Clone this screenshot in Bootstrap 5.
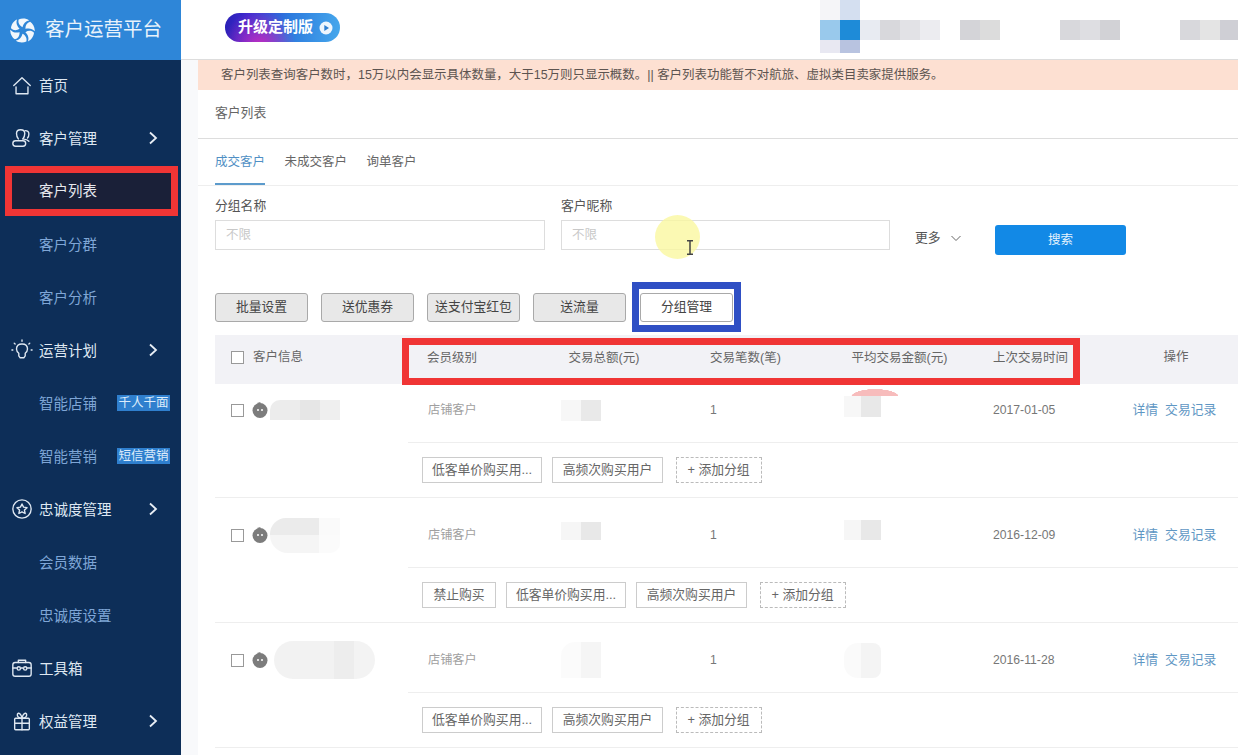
<!DOCTYPE html>
<html lang="zh-CN">
<head>
<meta charset="utf-8">
<title>客户运营平台</title>
<link href="https://cdn.jsdelivr.net/npm/bootstrap@5.3.0/dist/css/bootstrap.min.css" rel="stylesheet">
<style>
html,body{height:755px;overflow:hidden}
body{font-family:"Liberation Sans","Noto Sans CJK SC",sans-serif;font-size:13px;color:#666;background:#f8f9fb}
.shell{width:1238px;height:755px;position:relative}
.side-col{width:181px;flex:none;background:#0d2e58;color:#dfe8f2;height:755px;overflow:hidden}
.brand{height:60px;background:#2e86d8;color:#e8f2fb;font-size:19.5px;padding-left:10px;gap:10px}
.side-item{height:53px;padding:3px 0 0 11px;color:#dfe8f2;font-size:14.5px;white-space:nowrap}
.side-first{height:50px;margin-bottom:1.5px}
.side-item svg.ic{width:22px;height:22px;flex:none;margin-right:6px;margin-top:-3px;fill:none;stroke:#dfe8f2;stroke-width:1.5;stroke-linecap:round;stroke-linejoin:round}
.side-item .chev{position:absolute;left:148px;margin-top:-3px;width:10px;height:14px;fill:none;stroke:#e8eef5;stroke-width:1.8}
.side-sub{padding-left:39px;color:#7fa6d6}
.side-tag{position:absolute;left:117px;margin-top:-3px;width:53px;height:16px;line-height:16px;background:#2f7fce;color:#dcecfb;font-size:12.5px;text-align:center;white-space:nowrap;overflow:hidden}
.side-hit{height:50px;margin:1.5px 3px 1.5px 5px;border:7px solid #f03535;background:#1a2038;color:#e6e8ee;padding:2px 0 0 27px;font-size:14.5px}
.main-col{flex:1;min-width:0;height:755px}
.top-bar{height:60px;background:#fff;border-bottom:1px solid #ddd;padding-left:44px}
.upgrade{height:29px;width:115px;margin-bottom:4px;border-radius:15px;color:#fff;font-weight:700;font-size:15px;padding-left:13px;gap:6px;white-space:nowrap;background:radial-gradient(circle at 30% 115%,#c42bc0 0,rgba(196,43,192,0) 42%),linear-gradient(95deg,#2a1fb5 0,#3d2bd0 20%,#2c7ade 55%,#46a8ec 100%)}
.mosaic{width:418px;height:53px;align-self:flex-start;margin-left:auto;background:
linear-gradient(90deg,#f5f5f8 0 20px,#d4dff0 20px 40px,transparent 40px) 0 0/100% 20px no-repeat,
linear-gradient(90deg,#99c9ec 0 20px,#1e8bd8 20px 40px,#e8ebf2 40px 60px,#d8d8dc 60px 80px,#e2e2e6 80px 100px,#ececf0 100px 120px,transparent 120px 140px,#d4d4d8 140px 160px,#dcdcdc 160px 180px,transparent 180px 240px,#d8d8dc 240px 260px,#dedee2 260px 280px,#d2d2d6 280px 300px,transparent 300px 360px,#d8d8dc 360px 380px,#e4e4e4 380px 400px,#cfcfd5 400px 418px) 0 20px/100% 20px no-repeat,
linear-gradient(90deg,#e8e8f2 0 20px,#b8c3e0 20px 40px,transparent 40px) 0 40px/100% 13px no-repeat}
.page{margin-left:17px;background:#fff;height:695px;overflow:hidden}
.page>*{flex:none}
.notice{height:30px;background:#fde0d2;color:#5c5450;font-size:12.46px;padding-left:23px;white-space:nowrap;overflow:hidden}
.crumb{height:49px;margin-left:0;padding:0 0 3px 17px;border-bottom:1px solid #ddd;color:#666;font-size:12.8px}
.tabs-row{height:47px;padding-left:17px;gap:19.5px;border-bottom:1px solid #eee;font-size:12.5px}
.tabs-row .nav-link{padding:0;height:46px;line-height:46px;color:#666}
.tabs-row .nav-link.active{color:#4f8fc4;border-bottom:2px solid #5c9bcc}
.search-row{padding:11px 0 0 17px}
.field-label{display:block;font-size:12.8px;color:#555;line-height:18px;margin:0 0 5px}
.fld1{width:330px;margin-right:16px}
.fld2{width:329px}
.search-row .form-control{height:30px;border-radius:0;border:1px solid #ddd;padding:0 10px;font-size:12.5px;font-family:inherit}
.search-row .form-control::placeholder{color:#c8c8c8}
.more-link{margin:26px 0 0 25px;width:80px;color:#555;font-size:12.8px;gap:10px;height:30px}
.more-link svg{width:10px;height:7px;fill:none;stroke:#666;stroke-width:1}
.search-btn{margin:28px 0 0 0;width:131px;height:30px;background:#1289e6;border:0;border-radius:3px;color:#e6f3fd;font-size:12.5px;padding:0}
.tool-row{margin-top:27px;padding-left:17px;gap:13px;height:50px}
.tool-btn{width:93px;height:29px;padding:0;background:#e8e8e8;border:1px solid #a9a9a9;border-radius:3px;color:#444;font-size:12.8px;white-space:nowrap}
.blue-frame{width:109px;height:50px;border:7px solid #2f4fc4;margin-left:-7px;padding:0 1px}
.blue-frame .tool-btn{background:#fff;width:93px}
.head-row{margin:3px 0 1px 17px;height:49px;background:#f2f2f6;color:#666;font-size:12.5px;white-space:nowrap}
.head-left{width:187px;padding:0 0 5px 16px;gap:9px;align-self:stretch}
.red-frame{width:678px;height:47px;align-self:flex-end;margin-bottom:-1px;border:7px solid #f03535;padding:0 0 7px 18px}
.cl{width:141.5px;flex:none}
.head-ops{padding:0 0 5px 34px;text-align:center;flex:1}
.tick{width:13px;height:13px;border:1px solid #999;background:#fff;flex:none;display:block}
.data-row{margin-left:17px;border-bottom:1px solid #eee;height:125px;color:#777;font-size:12.2px;white-space:nowrap}
.row-top{height:70px;padding-top:5px;margin-left:193px;border-bottom:1px solid #eee}
.row-first{height:113px}
.row-first .row-top{height:58px;padding-top:0;padding-bottom:7px}
.row-cell0{width:212px;margin-left:-193px;padding-left:16px;gap:9px;flex:none}
.tier{color:#a0a0a0;padding-left:1px}
.pad-blob{margin-left:-8px}
.cust{margin-left:-1px;width:16px;height:16px;flex:none}
.cust-row{gap:2px}
.blur-a{width:70px;height:20px;border-radius:10px 0 0 0;background:linear-gradient(90deg,#ececec 0 30px,#e6e6e6 30px 50px,#efefef 50px)}
.blur-b{width:70px;height:35px;border-radius:16px 0 10px 18px;background:linear-gradient(90deg,#ebebeb 0 49px,#fafafa 49px) 0 0/100% 17px no-repeat,linear-gradient(90deg,#f5f5f5 0 49px,#fbfbfb 49px) 0 17px/100% 18px no-repeat}
.blur-c{width:101px;height:38px;margin-left:4px;border-radius:19px;background:linear-gradient(90deg,#f2f2f2 0 60px,#ededed 60px 80px,#f3f3f3 80px)}
.amt1{width:40px;height:21px;background:linear-gradient(90deg,#f7f7f7 0 20px,#e9e9e9 20px)}
.amt2{width:40px;height:18px;margin-top:-8px;background:linear-gradient(90deg,#f6f6f6 0 20px,#e8e8e8 20px)}
.amt3{width:40px;height:36px;border-radius:14px 0 0 0;background:linear-gradient(90deg,#fbfbfb 0 20px,#f5f5f5 20px)}
.avg1{width:54px;height:28px;margin-top:-14px;background:radial-gradient(ellipse 24px 8px at 31px 8px,#f7bcbc 98%,transparent 100%) 0 0/54px 7px no-repeat,linear-gradient(90deg,#f7f7f7 0 17px,#e8e8e8 17px 37px,transparent 37px) 0 7px/54px 21px no-repeat}
.avg2{width:37px;height:20px;margin-top:-10px;background:linear-gradient(90deg,#f6f6f6 0 17px,#e8e8e8 17px)}
.avg3{width:37px;height:35px;border-radius:14px 8px 8px 14px;background:linear-gradient(90deg,#fafafa 0 17px,#f4f4f4 17px)}
.ops{gap:7px;margin-left:-2px;color:#5f97c4;font-size:12.8px}
.tag-row{margin-left:207px;padding-top:14px;gap:10px}
.tag-chip{height:26px;line-height:24px;border:1px solid #ccc;padding:0;color:#666;font-size:12.8px;background:#fff;text-align:center}
.tag-short{width:74px}
.tag-long{width:120px}
.tag-mid{width:111px}
.tag-add{width:86px;border:1px dashed #bbb;margin-left:2.5px}
.cursor-glow{position:absolute;left:655px;top:215px;width:45px;height:44px;border-radius:50%;background:rgba(250,248,160,.8)}
.cursor-beam{position:absolute;left:686px;top:240px;width:8px;height:15px;fill:none;stroke:#444;stroke-width:1.5}
</style>
</head>
<body>
<div class="shell d-flex">
  <aside class="side-col d-flex flex-column">
    <div class="brand d-flex align-items-center">
      <svg width="25" height="25" viewBox="-13 -13 26 26" fill="#f2f7fc" aria-hidden="true">
        <path d="M0-3.500C-3-5-5-8-4-11.500C-1-13 4-13 7-10.500C3-10 1-7 0-3.500Z"/>
        <path transform="rotate(60)" d="M0-3.500C-3-5-5-8-4-11.500C-1-13 4-13 7-10.500C3-10 1-7 0-3.500Z"/>
        <path transform="rotate(120)" d="M0-3.500C-3-5-5-8-4-11.500C-1-13 4-13 7-10.500C3-10 1-7 0-3.500Z"/>
        <path transform="rotate(180)" d="M0-3.500C-3-5-5-8-4-11.500C-1-13 4-13 7-10.500C3-10 1-7 0-3.500Z"/>
        <path transform="rotate(240)" d="M0-3.500C-3-5-5-8-4-11.500C-1-13 4-13 7-10.500C3-10 1-7 0-3.500Z"/>
        <path transform="rotate(300)" d="M0-3.500C-3-5-5-8-4-11.500C-1-13 4-13 7-10.500C3-10 1-7 0-3.500Z"/>
      </svg>
      <span>客户运营平台</span>
    </div>
    <nav class="nav flex-column flex-nowrap">
      <div class="side-item side-first d-flex align-items-center position-relative">
        <svg class="ic" viewBox="0 0 24 24"><path d="M3 12.500 12 4l9 8.500"/><path d="M5.500 14v7.500h13V14"/></svg>首页
      </div>
      <div class="side-item d-flex align-items-center position-relative">
        <svg class="ic" viewBox="0 0 24 24"><path d="M8 13c-1.500-2-2-3.500-2-6 0-2.500 2-4 4.500-4S15 4.500 15 7c0 2.500-.5 4-2 6"/><path d="M15.500 4c2.500 0 4 1.500 4 3.500 0 2-.5 3.500-1.500 4.500"/><rect x="2" y="15" width="14" height="6" rx="3"/><path d="M13 13c3 .5 5 1 6.500 2.500"/></svg>客户管理
        <svg class="chev" viewBox="0 0 10 14"><path d="m2 1.500 6 5.500-6 5.500"/></svg>
      </div>
      <div class="side-hit d-flex align-items-center">客户列表</div>
      <div class="side-item side-sub d-flex align-items-center">客户分群</div>
      <div class="side-item side-sub d-flex align-items-center">客户分析</div>
      <div class="side-item d-flex align-items-center position-relative">
        <svg class="ic" viewBox="0 0 24 24"><path d="M8.500 15.500C6.500 14 6 12.500 6 11c0-3.500 2.500-5.500 6-5.500s6 2 6 5.500c0 1.500-.5 3-2.500 4.500v3l-1.500 2h-4l-1.500-2z"/><path d="M12 1v1.500M3.500 4.500l1 1M20.500 4.500l-1 1M1 12h1M22 12h1"/></svg>运营计划
        <svg class="chev" viewBox="0 0 10 14"><path d="m2 1.500 6 5.500-6 5.500"/></svg>
      </div>
      <div class="side-item side-sub d-flex align-items-center position-relative">智能店铺<span class="side-tag">千人千面</span></div>
      <div class="side-item side-sub d-flex align-items-center position-relative">智能营销<span class="side-tag">短信营销</span></div>
      <div class="side-item d-flex align-items-center position-relative">
        <svg class="ic" viewBox="0 0 24 24"><circle cx="12" cy="12" r="10"/><path d="m12 6.500 1.700 3.500 3.800.5-2.800 2.600.7 3.800-3.400-1.800-3.400 1.800.7-3.800-2.800-2.600 3.800-.5z"/></svg>忠诚度管理
        <svg class="chev" viewBox="0 0 10 14"><path d="m2 1.500 6 5.500-6 5.500"/></svg>
      </div>
      <div class="side-item side-sub d-flex align-items-center">会员数据</div>
      <div class="side-item side-sub d-flex align-items-center">忠诚度设置</div>
      <div class="side-item d-flex align-items-center position-relative">
        <svg class="ic" viewBox="0 0 24 24"><rect x="2" y="6" width="20" height="15" rx="2.500"/><path d="M8 6V3.500h8V6"/><path d="M2 12h4M18 12h4M11 12h2"/><circle cx="8.500" cy="12.500" r="1.800"/><circle cx="15.500" cy="12.500" r="1.800"/></svg>工具箱
      </div>
      <div class="side-item d-flex align-items-center position-relative">
        <svg class="ic" viewBox="0 0 24 24"><rect x="4" y="9" width="16" height="12.500" rx="1"/><path d="M4 14.500h16M12 9v12.500"/><path d="M12 9C8 9 6.500 7 7 4.500 8 2.500 11 3.500 12 9ZM12 9c4 0 5.500-2 5-4.500C16 2.500 13 3.500 12 9Z"/></svg>权益管理
        <svg class="chev" viewBox="0 0 10 14"><path d="m2 1.500 6 5.500-6 5.500"/></svg>
      </div>
    </nav>
  </aside>

  <main class="main-col d-flex flex-column">
    <header class="top-bar d-flex align-items-center">
      <div class="upgrade d-flex align-items-center">
        <span>升级定制版</span>
        <svg width="14" height="14" viewBox="0 0 14 14" aria-hidden="true"><circle cx="7" cy="7" r="6.500" fill="#eef6fd"/><path d="M5.300 4v6L10 7z" fill="#2f7fd0"/></svg>
      </div>
      <div class="mosaic"></div>
    </header>
    <div class="page d-flex flex-column">
      <div class="notice d-flex align-items-center">客户列表查询客户数时，15万以内会显示具体数量，大于15万则只显示概数。|| 客户列表功能暂不对航旅、虚拟类目卖家提供服务。</div>
      <div class="crumb d-flex align-items-center">客户列表</div>
      <ul class="nav tabs-row">
        <li class="nav-item"><a class="nav-link active" href="#">成交客户</a></li>
        <li class="nav-item"><a class="nav-link" href="#">未成交客户</a></li>
        <li class="nav-item"><a class="nav-link" href="#">询单客户</a></li>
      </ul>
      <form class="search-row d-flex align-items-start">
        <div class="fld1"><label class="field-label">分组名称</label><input class="form-control" placeholder="不限"></div>
        <div class="fld2"><label class="field-label">客户昵称</label><input class="form-control" placeholder="不限"></div>
        <div class="more-link d-flex align-items-center">更多 <svg viewBox="0 0 10 7"><path d="m.5 1 4.500 4.500L9.500 1"/></svg></div>
        <button type="button" class="btn search-btn">搜索</button>
      </form>
      <div class="tool-row d-flex align-items-center">
        <button type="button" class="btn tool-btn">批量设置</button>
        <button type="button" class="btn tool-btn">送优惠券</button>
        <button type="button" class="btn tool-btn">送支付宝红包</button>
        <button type="button" class="btn tool-btn">送流量</button>
        <div class="blue-frame d-flex align-items-center"><button type="button" class="btn tool-btn">分组管理</button></div>
      </div>
      <div class="head-row d-flex align-items-center">
        <div class="head-left d-flex align-items-center"><span class="tick"></span>客户信息</div>
        <div class="red-frame d-flex align-items-center">
          <span class="cl">会员级别</span><span class="cl">交易总额(元)</span><span class="cl">交易笔数(笔)</span><span class="cl">平均交易金额(元)</span><span class="cl">上次交易时间</span>
        </div>
        <div class="head-ops">操作</div>
      </div>

      <div class="data-row row-first">
        <div class="row-top d-flex align-items-center">
          <div class="row-cell0 d-flex align-items-center"><span class="tick"></span>
            <div class="cust-row d-flex align-items-center"><svg class="cust" viewBox="0 0 16 16"><circle cx="8" cy="8.500" r="7.500" fill="#7c7c7c"/><path d="M5 1 8.500 0 8 3z" fill="#7c7c7c"/><circle cx="6" cy="8" r="1" fill="#fff"/><circle cx="10" cy="8" r="1" fill="#fff"/></svg><div class="blur-a"></div></div>
          </div>
          <div class="cl tier">店铺客户</div><div class="cl"><div class="amt1 pad-blob"></div></div><div class="cl">1</div><div class="cl"><div class="avg1 pad-blob"></div></div><div class="cl">2017-01-05</div>
          <div class="ops d-flex"><span>详情</span><span>交易记录</span></div>
        </div>
        <div class="tag-row d-flex"><span class="tag-chip tag-long">低客单价购买用...</span><span class="tag-chip tag-mid">高频次购买用户</span><span class="tag-chip tag-add">+ 添加分组</span></div>
      </div>

      <div class="data-row">
        <div class="row-top d-flex align-items-center">
          <div class="row-cell0 d-flex align-items-center"><span class="tick"></span>
            <div class="cust-row d-flex align-items-center"><svg class="cust" viewBox="0 0 16 16"><circle cx="8" cy="8.500" r="7.500" fill="#7c7c7c"/><path d="M5 1 8.500 0 8 3z" fill="#7c7c7c"/><circle cx="6" cy="8" r="1" fill="#fff"/><circle cx="10" cy="8" r="1" fill="#fff"/></svg><div class="blur-b"></div></div>
          </div>
          <div class="cl tier">店铺客户</div><div class="cl"><div class="amt2 pad-blob"></div></div><div class="cl">1</div><div class="cl"><div class="avg2 pad-blob"></div></div><div class="cl">2016-12-09</div>
          <div class="ops d-flex"><span>详情</span><span>交易记录</span></div>
        </div>
        <div class="tag-row d-flex"><span class="tag-chip tag-short">禁止购买</span><span class="tag-chip tag-long">低客单价购买用...</span><span class="tag-chip tag-mid">高频次购买用户</span><span class="tag-chip tag-add">+ 添加分组</span></div>
      </div>

      <div class="data-row">
        <div class="row-top d-flex align-items-center">
          <div class="row-cell0 d-flex align-items-center"><span class="tick"></span>
            <div class="cust-row d-flex align-items-center"><svg class="cust" viewBox="0 0 16 16"><circle cx="8" cy="8.500" r="7.500" fill="#7c7c7c"/><path d="M5 1 8.500 0 8 3z" fill="#7c7c7c"/><circle cx="6" cy="8" r="1" fill="#fff"/><circle cx="10" cy="8" r="1" fill="#fff"/></svg><div class="blur-c"></div></div>
          </div>
          <div class="cl tier">店铺客户</div><div class="cl"><div class="amt3 pad-blob"></div></div><div class="cl">1</div><div class="cl"><div class="avg3 pad-blob"></div></div><div class="cl">2016-11-28</div>
          <div class="ops d-flex"><span>详情</span><span>交易记录</span></div>
        </div>
        <div class="tag-row d-flex"><span class="tag-chip tag-long">低客单价购买用...</span><span class="tag-chip tag-mid">高频次购买用户</span><span class="tag-chip tag-add">+ 添加分组</span></div>
      </div>
    </div>
  </main>
  <div class="cursor-glow"></div>
  <svg class="cursor-beam" viewBox="0 0 8 15"><path d="M1 .7h6M4 .7v13.600M1 14.300h6"/></svg>
</div>
<script src="https://cdn.jsdelivr.net/npm/bootstrap@5.3.0/dist/js/bootstrap.bundle.min.js"></script>
</body>
</html>
